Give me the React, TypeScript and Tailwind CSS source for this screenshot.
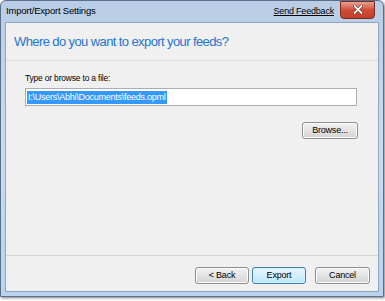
import React from "react";

const Btn = ({ label, active = false, w }: { label: string; active?: boolean; w: string }) => (
  <div
    className={`${w} h-[17px] flex items-center justify-center rounded-[3px] border text-[9px] tracking-[-0.2px] text-black ${
      active
        ? "border-[#3c7fb1] bg-gradient-to-b from-[#eaf6fd] to-[#bee6fd] shadow-[inset_0_0_0_1px_#d8f0fd]"
        : "border-[#8e8f8f] bg-gradient-to-b from-[#f2f2f2] to-[#d4d4d4] shadow-[inset_0_0_0_1px_#fbfbfb]"
    }`}
  >
    {label}
  </div>
);

export default function App() {
  return (
    <div className="w-[385px] h-[301px] bg-white" style={{ fontFamily: "'Liberation Sans', Arial, sans-serif" }}>
      <div className="relative w-[384px] h-[297px] rounded-t-[6px] border border-[#5a6f8a] bg-gradient-to-b from-[#b9cde6] via-[#c9dcf1] to-[#bad3ef] shadow-[1px_1px_3px_rgba(0,0,0,0.5)] px-[4px] pb-[4px] flex flex-col">
        {/* title bar */}
        <div className="h-[21px] flex items-center justify-between pl-[1px] pr-[4px]">
          <span className="text-[9.5px] tracking-[-0.2px] text-black">Import/Export Settings</span>
          <div className="flex items-center gap-[6px]">
            <span className="text-[9px] tracking-[-0.2px] text-black underline">Send Feedback</span>
            <div className="w-[35px] h-[18px] -mt-[4px] rounded-b-[4px] border border-[#7a2a1e] bg-gradient-to-b from-[#e8a093] via-[#d04b35] to-[#c2402c] flex items-center justify-center">
              <svg width="10" height="9" viewBox="0 0 10 9">
                <path d="M1.5 1 L8.5 8 M8.5 1 L1.5 8" stroke="#5b1a10" strokeWidth="3" strokeLinecap="round" />
                <path d="M1.5 1 L8.5 8 M8.5 1 L1.5 8" stroke="#ffffff" strokeWidth="1.8" strokeLinecap="round" />
              </svg>
            </div>
          </div>
        </div>
        {/* content */}
        <div className="flex-1 flex flex-col bg-[#f0f0f0] border border-[#8fa4c0]">
          <div className="h-[38px] pl-[8px] pt-[6px] border-b border-[#dcdcdc]">
            <span className="text-[13px] tracking-[-0.6px] text-[#2474d4]">Where do you want to export your feeds?</span>
          </div>
          <div className="flex-1 flex flex-col px-[19px] pt-[11px]">
            <span className="text-[8.5px] tracking-[-0.2px] text-black leading-[12px]">Type or browse to a file:</span>
            <div className="mt-[4px] h-[18px] w-[332px] border border-[#abadb3] bg-white flex items-center px-[1px]">
              <span className="text-[9px] tracking-[-0.25px] leading-[13px] bg-[#3399ff] text-white px-[1px]">
                I:\Users\Abhi\Documents\feeds.opml
              </span>
            </div>
            <div className="mt-[16px] flex justify-end pr-[1px]">
              <Btn label="Browse..." w="w-[56px]" />
            </div>
          </div>
          <div className="h-[36px] border-t border-[#d5d5d5] flex items-start justify-end pt-[11px] pr-[8px]">
            <Btn label="< Back" w="w-[54px]" />
            <div className="w-[3px]" />
            <Btn label="Export" active w="w-[54px]" />
            <div className="w-[9px]" />
            <Btn label="Cancel" w="w-[55px]" />
          </div>
        </div>
      </div>
    </div>
  );
}
